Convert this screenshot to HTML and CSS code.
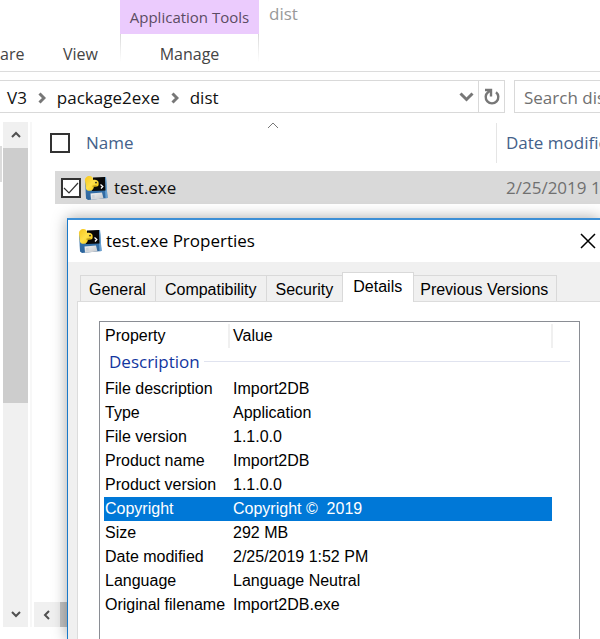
FILE: index.html
```html
<!DOCTYPE html>
<html lang="en">
<head>
<meta charset="utf-8">
<title>dist</title>
<link rel="stylesheet" href="styles.css">
</head>
<body>
<svg class="defs" aria-hidden="true">
  <defs>
    <linearGradient id="disk" x1="0" y1="0" x2="0" y2="1"><stop offset="0" stop-color="#3f7fb8"/><stop offset="1" stop-color="#2c649c"/></linearGradient>
    <linearGradient id="snake" x1="0" y1="0" x2="1" y2="1"><stop offset="0" stop-color="#f6c51c"/><stop offset=".5" stop-color="#ffe04a"/><stop offset="1" stop-color="#f2c200"/></linearGradient>
    <linearGradient id="metal" x1="0" y1="0" x2="1" y2="1"><stop offset="0" stop-color="#f4f4f4"/><stop offset="1" stop-color="#bfc3c8"/></linearGradient>
    <symbol id="app" viewBox="0 0 24 26">
      <path d="M1 5 22 2 23.500 23 4 25 2 23.500Z" fill="url(#disk)"/>
      <path d="M20.500 2.500 22 2 23.500 23 21.500 23.200Z" fill="#69a2d2"/>
      <path d="M9 2.500 21 2 21.500 15.500 8 16Z" fill="#080808"/>
      <path d="M6.500 18.500 18 17.500 19.500 23.500 7 24.800Z" fill="url(#metal)"/>
      <path d="M8 20 10.500 19.800 10.800 23.200 8.200 23.500Z" fill="#cdd2d8"/>
      <path d="M1 6C.5 3 3 1 5.500 1S9.200 3 9.200 5C11 4.300 14.300 4.800 14.600 7.600S14.500 11.500 12.500 11.500L9.800 11.700C9.800 13.500 8.500 15.800 5.500 15.800S1.500 13.500 1.800 11.500Z" fill="url(#snake)"/>
      <path d="M8.500 11.200 12.500 10.800" stroke="#9a7a00" stroke-width=".8"/>
      <circle cx="12" cy="7.600" r=".9" fill="#222"/>
      <path d="m16.500 9.500 2.300 2-1.800 2" fill="none" stroke="#fff" stroke-width="1.300"/>
    </symbol>
  </defs>
</svg>

<div class="explorer">
  <header class="ribbon">
    <nav class="ribbon-tabs">
      <a class="ribbon-tab share" href="#share">are</a>
      <a class="ribbon-tab view" href="#view">View</a>
    </nav>
    <div class="context-tab">
      <span class="context-group">Application Tools</span>
      <a class="ribbon-tab manage" href="#manage">Manage</a>
    </div>
    <h1 class="window-title">dist</h1>
  </header>

  <div class="address-row">
    <div class="address">
      <nav class="crumbs">
        <a href="#v3">V3</a>
        <svg class="crumb-sep" viewBox="0 0 8 12"><path d="m1.500 1.500 4.500 4.500-4.500 4.500"/></svg>
        <a href="#package2exe">package2exe</a>
        <svg class="crumb-sep" viewBox="0 0 8 12"><path d="m1.500 1.500 4.500 4.500-4.500 4.500"/></svg>
        <a href="#dist">dist</a>
      </nav>
      <button class="address-btn history" aria-label="Previous locations"><svg width="15" height="10" viewBox="0 0 15 10"><path d="m1.500 1.500 6 6 6-6"/></svg></button>
      <button class="address-btn refresh" aria-label="Refresh"><svg width="18" height="18" viewBox="0 0 18 18"><path d="M13 4.200A6.300 6.300 0 1 1 5 4.200L7 3"/><path d="M2 2H8V8.500"/></svg></button>
    </div>
    <input class="search" type="text" placeholder="Search dist" aria-label="Search dist">
  </div>

  <main class="content">
    <div class="tree-stub"></div>
    <div class="vscroll">
      <svg class="arrow" viewBox="0 0 10 8"><path d="m1 6 4-4 4 4"/></svg>
      <div class="vthumb"></div>
      <div class="vtrack"></div>
      <svg class="arrow" viewBox="0 0 10 8"><path d="m1 2 4 4 4-4"/></svg>
    </div>
    <div class="files">
      <div class="file-head">
        <input class="tick" type="checkbox" aria-label="Select all">
        <button class="col name-col">Name</button>
        <svg class="sort" viewBox="0 0 12 7"><path d="m1 6 5-5 5 5"/></svg>
        <button class="col date-col">Date modified</button>
      </div>
      <div class="file-row">
        <input class="tick" type="checkbox" checked aria-label="Select test.exe">
        <svg class="app-icon"><use href="#app"/></svg>
        <span class="file-name">test.exe</span>
        <span class="file-date">2/25/2019 1:52 PM</span>
      </div>
      <div class="hscroll">
        <svg class="arrow" viewBox="0 0 8 10"><path d="m6 1-4 4 4 4"/></svg>
        <div class="hthumb"></div>
      </div>
    </div>
  </main>
</div>

<section class="dialog" role="dialog" aria-labelledby="dialog-title">
  <header class="dialog-bar">
    <svg class="app-icon"><use href="#app"/></svg>
    <h2 id="dialog-title">test.exe Properties</h2>
    <button class="close" aria-label="Close"><svg width="16" height="16" viewBox="0 0 16 16"><path d="m1 1 14 14M15 1 1 15"/></svg></button>
  </header>
  <div class="tabs" role="tablist">
    <button class="tab" role="tab">General</button>
    <button class="tab" role="tab">Compatibility</button>
    <button class="tab" role="tab">Security</button>
    <button class="tab selected" role="tab" aria-selected="true">Details</button>
    <button class="tab" role="tab">Previous Versions</button>
  </div>
  <div class="panel" role="tabpanel">
    <div class="list">
      <table>
        <colgroup><col class="c-prop"><col class="c-value"><col class="c-gap"></colgroup>
        <thead><tr><th scope="col">Property</th><th scope="col">Value</th><td></td></tr></thead>
        <tbody>
          <tr class="group"><th colspan="3" scope="colgroup"><span>Description</span></th></tr>
          <tr><td>File description</td><td>Import2DB</td></tr>
          <tr><td>Type</td><td>Application</td></tr>
          <tr><td>File version</td><td>1.1.0.0</td></tr>
          <tr><td>Product name</td><td>Import2DB</td></tr>
          <tr><td>Product version</td><td>1.1.0.0</td></tr>
          <tr class="active"><td>Copyright</td><td>Copyright ©&nbsp; 2019</td></tr>
          <tr><td>Size</td><td>292 MB</td></tr>
          <tr><td>Date modified</td><td>2/25/2019 1:52 PM</td></tr>
          <tr><td>Language</td><td>Language Neutral</td></tr>
          <tr><td>Original filename</td><td>Import2DB.exe</td></tr>
        </tbody>
      </table>
    </div>
  </div>
</section>
</body>
</html>
```

FILE: styles.css
```css
* { box-sizing: border-box; }

body {
  margin: 0;
  min-height: 100vh;
  position: relative;
  display: flex;
  overflow: hidden;
  background: #fff;
  color: #111;
  font: 17px/24px "Open Sans", "Noto Sans", sans-serif;
}

h1, h2 { margin: 0; font-weight: 400; }
a { color: inherit; text-decoration: none; }
button { padding: 0; border: 0; background: none; color: inherit; font: inherit; }
svg { display: block; flex: none; }
.defs { position: absolute; width: 0; height: 0; }

.explorer { flex: 1; min-width: 0; display: flex; flex-direction: column; }

/* Ribbon */
.ribbon { display: flex; height: 72px; border-bottom: 1px solid #dcdcdc; font-size: 16px; color: #444; }
.ribbon-tabs { width: 120px; display: flex; align-items: flex-end; justify-content: space-between; padding: 0 22px 5px 0; }
.ribbon-tab { display: block; }
.context-tab {
  width: 139px;
  display: flex;
  flex-direction: column;
  text-align: center;
  white-space: nowrap;
  background: linear-gradient(#d8d8d8, #fff) 0 34px / 1px 28px no-repeat, linear-gradient(#d8d8d8, #fff) 100% 34px / 1px 28px no-repeat;
}
.context-group { height: 34px; line-height: 35px; background: #ebcbfd; color: #5b4c63; font-size: 15px; }
.manage { padding-top: 8px; }
.window-title { padding: 2px 10px; font-size: 17px; color: #999; }

/* Address row */
.address-row { display: flex; gap: 9px; padding-top: 8px; height: 42px; }
.address { flex: 1; display: flex; height: 33px; border: 1px solid #d9d9d9; border-left: 0; }
.crumbs { flex: 1; display: flex; align-items: center; gap: 11px; padding: 2px 0 0 7px; }
.crumb-sep { width: 8px; height: 12px; }
.crumb-sep path, .address-btn path { fill: none; stroke: #777; stroke-width: 3; }
.address-btn { display: flex; align-items: center; justify-content: center; width: 25px; }
.history { padding-left: 2px; }
.refresh { width: 26px; border-left: 1px solid #d9d9d9; }
.refresh path { stroke-width: 2.4; }
.search { width: 86px; height: 33px; padding: 2px 0 0 9px; border: 1px solid #d9d9d9; border-right: 0; border-radius: 0; font: inherit; outline: 0; }
.search::placeholder { color: #707070; opacity: 1; }

/* Content */
.content { flex: 1; display: flex; margin: 8px 0 12px; }
.tree-stub { width: 2px; height: 36px; margin: 24px 1px 0 0; background: #dcdcdc; }
.vscroll { width: 25px; display: flex; flex-direction: column; align-items: center; background: #f0f0f0; }
.arrow { width: 10px; height: 26px; }
.arrow path { fill: none; stroke: #505050; stroke-width: 2; }
.vthumb { align-self: stretch; flex: 0 0 255px; background: #cdcdcd; }
.vtrack { flex: 1; }
.files { flex: 1; min-width: 0; margin-left: 2px; border-left: 2px solid #f7f7f7; display: flex; flex-direction: column; }
.tick {
  appearance: none;
  flex: none;
  width: 20px;
  height: 20px;
  margin: 0;
  border: 2px solid #333;
  background: #fff;
}
.tick:checked { background: #fff url("data:image/svg+xml,%3Csvg xmlns='http://www.w3.org/2000/svg' viewBox='0 0 16 16'%3E%3Cpath d='m1 8 5 5 9-10' fill='none' stroke='%23333' stroke-width='1.200'/%3E%3C/svg%3E"); }
.file-head { position: relative; display: flex; align-items: center; height: 41px; padding-left: 18px; color: #44618a; }
.col { text-align: left; white-space: nowrap; }
.name-col { flex: 1; padding-left: 16px; }
.date-col { width: 104px; height: 40px; padding-left: 9px; border-left: 1px solid #e5e5e5; overflow: hidden; }
.sort { position: absolute; top: 0; left: 235px; width: 12px; height: 7px; }
.sort path { fill: none; stroke: #777; }
.file-row { display: flex; align-items: center; height: 33px; margin: 8px 0 0 23px; padding: 1px 0 0 6px; background: #d9d9d9; white-space: nowrap; }
.app-icon { width: 24px; height: 26px; }
.file-row .app-icon { margin-left: 3px; }
.file-name { flex: 1; padding-left: 6px; }
.file-date { width: 94px; overflow: hidden; color: #707070; }
.hscroll { display: flex; align-items: center; height: 25px; margin: auto 0 0 2px; background: #f0f0f0; }
.hscroll .arrow { width: 26px; height: 10px; }
.hthumb { flex: 1; align-self: stretch; background: #c4c4c4; }

/* Properties dialog */
.dialog {
  position: absolute;
  inset: 218px 0 0 67px;
  display: flex;
  flex-direction: column;
  border-top: 2px solid #3c8fd6;
  border-left: 1px solid #1979ca;
  background: #f0f0f0;
  box-shadow: 0 0 14px rgba(0, 0, 0, .35);
  color: #000;
}
.dialog-bar { display: flex; align-items: center; height: 42px; padding: 0 4px 0 10px; background: #fff; }
.dialog-bar h2 { flex: 1; padding-left: 4px; font-size: 17px; }
.close path { fill: none; stroke: #000; stroke-width: 1.5; }
.tabs { display: flex; align-items: flex-end; height: 39px; padding-left: 12px; font: 16px/24px "Liberation Sans", Arial, sans-serif; }
.tab { height: 26px; padding: 2px 9px 0; border: 1px solid #d9d9d9; border-width: 1px 0 0 1px; white-space: nowrap; }
.tab:first-child { padding-left: 8px; }
.tab:last-child { padding: 2px 8px 0 6px; border-right-width: 1px; }
.tab.selected { position: relative; height: 30px; margin-bottom: -1px; padding: 0 11px 2px 10px; border-right-width: 1px; background: #fff; }
.tab.selected + .tab { border-left: 0; }
.panel { flex: 1; min-height: 0; display: flex; margin-left: 9px; padding: 19px 20px 0; border: 1px solid #dcdcdc; border-width: 1px 0 0 1px; background: #fff; }
.list { flex: 1; overflow: hidden; border: 1px solid #8a8d94; border-bottom: 0; margin-left: 1px; padding: 2px 9px 0 4px; }

table { width: 100%; table-layout: fixed; border-collapse: collapse; font: 16px/22px "Liberation Sans", Arial, sans-serif; }
.c-prop { width: 125px; }
.c-gap { width: 18px; }
th, td { height: 24px; padding: 1px 0 1px 1px; text-align: left; font-weight: 400; white-space: nowrap; }
td + td { padding-left: 4px; }
th + th { padding-left: 3px; }
thead th { border-right: 2px solid #f0f0f0; }
.group th { height: 29px; padding: 0 0 2px 5px; font: 17px/27px "Open Sans", "Noto Sans", sans-serif; color: #1236a0; }
.group span { display: flex; align-items: center; gap: 4px; }
.group span::after { content: ""; flex: 1; height: 1px; background: #e0e3ef; }
.active td { background: #0078d7; color: #fff; }
```
